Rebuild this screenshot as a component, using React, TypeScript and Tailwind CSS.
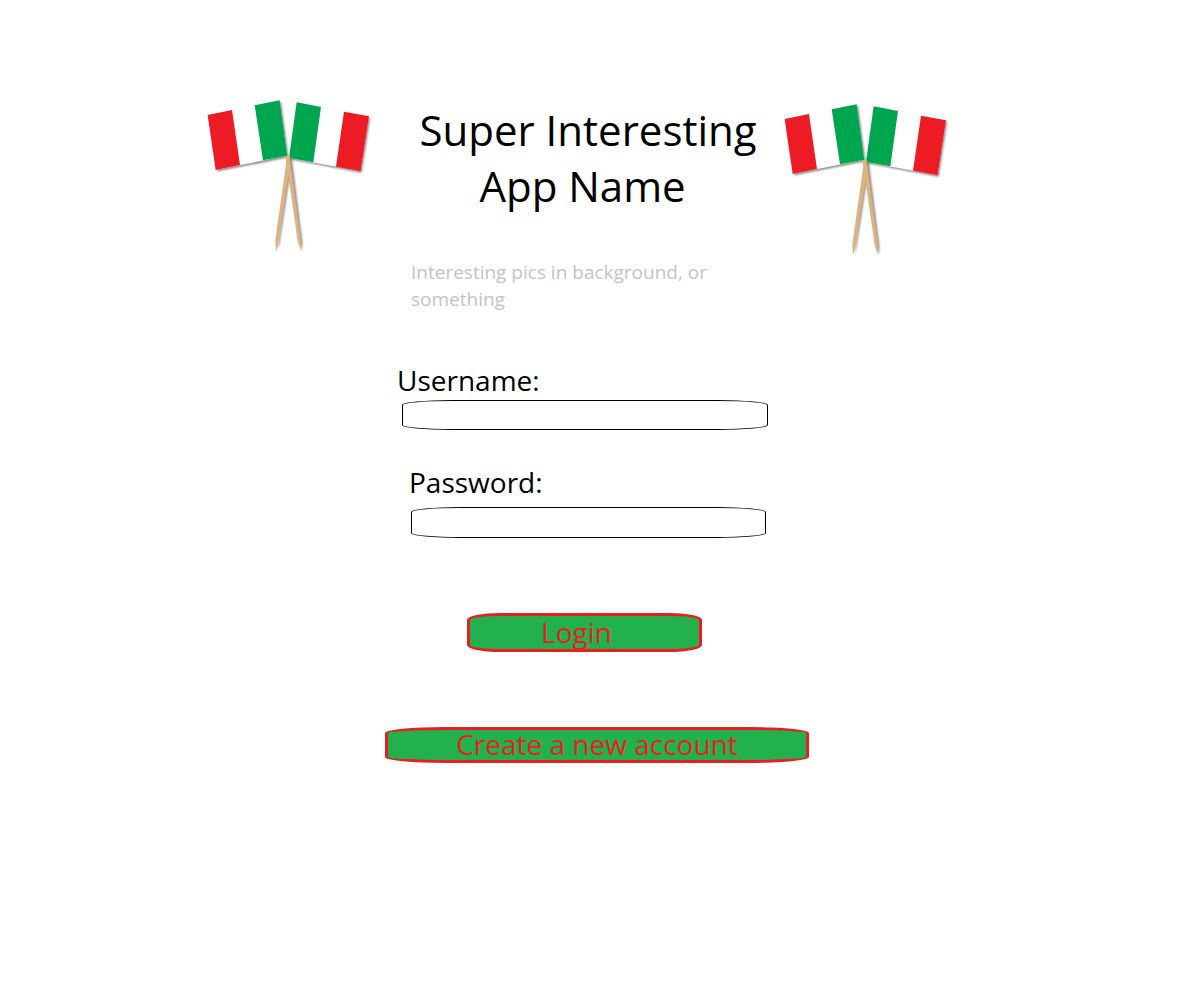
import type { ButtonHTMLAttributes, InputHTMLAttributes } from "react";

function CrossedFlags({ className = "" }: { className?: string }) {
  return (
    <svg
      viewBox="0 0 570 492"
      role="img"
      aria-label="Crossed Italian flags"
      className={`h-[164px] w-[190px] shrink-0 ${className}`}
    >
      <defs>
        <filter id="soft" x="-20%" y="-20%" width="140%" height="140%">
          <feGaussianBlur stdDeviation="3" />
        </filter>
      </defs>
      <g fill="#555" opacity="0.75" filter="url(#soft)">
        <path d="M42 80 L258 36 L280 202 L67 244 Z" />
        <path d="M308 42 L525 83 L500 248 L286 208 Z" />
        <path d="M280 204 L290 204 L322 458 L321 482 L310 450 Z" />
        <path d="M280 204 L292 204 L254 456 L246 485 Z" />
      </g>
      <path d="M38 75 L254 31 L277 197 L62 240 Z" fill="#fff" />
      <path d="M38 75 L111 60 L135 225 L62 240 Z" fill="#ed1c24" />
      <path d="M179 46 L254 31 L277 197 L204 211 Z" fill="#00a64f" />
      <path d="M305 37 L522 79 L497 244 L282 204 Z" fill="#fff" />
      <path d="M305 37 L378 51 L355 217 L282 204 Z" fill="#00a64f" />
      <path d="M447 65 L522 79 L497 244 L423 230 Z" fill="#ed1c24" />
      <path d="M276 203 L289 203 L250 458 L243 485 L241 450 Z" fill="#deb27c" />
      <path d="M281 203 L289 203 L282 248 Z" fill="#8f6d48" />
      <path d="M271 198 L284 198 L319 458 L318 483 L309 454 Z" fill="#deb27c" />
    </svg>
  );
}

function Field({
  label,
  id,
  labelClass,
  inputClass,
  ...rest
}: {
  label: string;
  id: string;
  labelClass: string;
  inputClass: string;
} & InputHTMLAttributes<HTMLInputElement>) {
  return (
    <div className="flex flex-col">
      <label htmlFor={id} className={`text-[28px] leading-9 ${labelClass}`}>
        {label}
      </label>
      <input
        id={id}
        className={`border border-black bg-white px-4 text-lg outline-none rounded-[50px/5px] ${inputClass}`}
        {...rest}
      />
    </div>
  );
}

function ActionButton({ className = "", ...rest }: ButtonHTMLAttributes<HTMLButtonElement>) {
  return (
    <button
      className={`flex items-center justify-center border-3 border-[#ed1c24] bg-[#22b14c] pb-0.5 text-[28px] leading-8 text-[#ed1c24] ${className}`}
      {...rest}
    />
  );
}

export default function App() {
  return (
    <main className="bg-white pt-[90px] font-['Open_Sans',sans-serif] text-black">
      <header className="flex items-start justify-center pr-11">
        <CrossedFlags />
        <h1 className="w-[387px] pl-5 pt-3 text-center text-[42px] leading-14">
          Super Interesting App Name&nbsp;
        </h1>
        <CrossedFlags className="mt-1" />
      </header>

      <div className="mx-auto w-[430px] pt-px pr-[6px]">
        <p className="ml-[26px] w-[330px] text-[19px] leading-[27px] text-[#c3c3c3]">
          Interesting pics in background, or something
        </p>
        <form className="mt-[49px] flex flex-col" onSubmit={(e) => e.preventDefault()}>
          <Field
            label="Username:"
            id="username"
            autoComplete="username"
            labelClass="ml-3 mb-0.5"
            inputClass="ml-[17px] h-[30px] w-[366px]"
          />
          <div className="mt-[34px]">
            <Field
              label="Password:"
              id="password"
              type="password"
              autoComplete="current-password"
              labelClass="ml-6 mb-[7px]"
              inputClass="ml-[26px] h-[31px] w-[355px]"
            />
          </div>
          <ActionButton type="submit" className="mt-[75px] ml-[82px] h-[39px] w-[235px] pr-4 rounded-[33px/7px]">
            Login
          </ActionButton>
          <ActionButton type="button" className="mt-[75px] h-9 w-full rounded-[60px/6px]">
            Create a new account
          </ActionButton>
        </form>
      </div>
    </main>
  );
}
